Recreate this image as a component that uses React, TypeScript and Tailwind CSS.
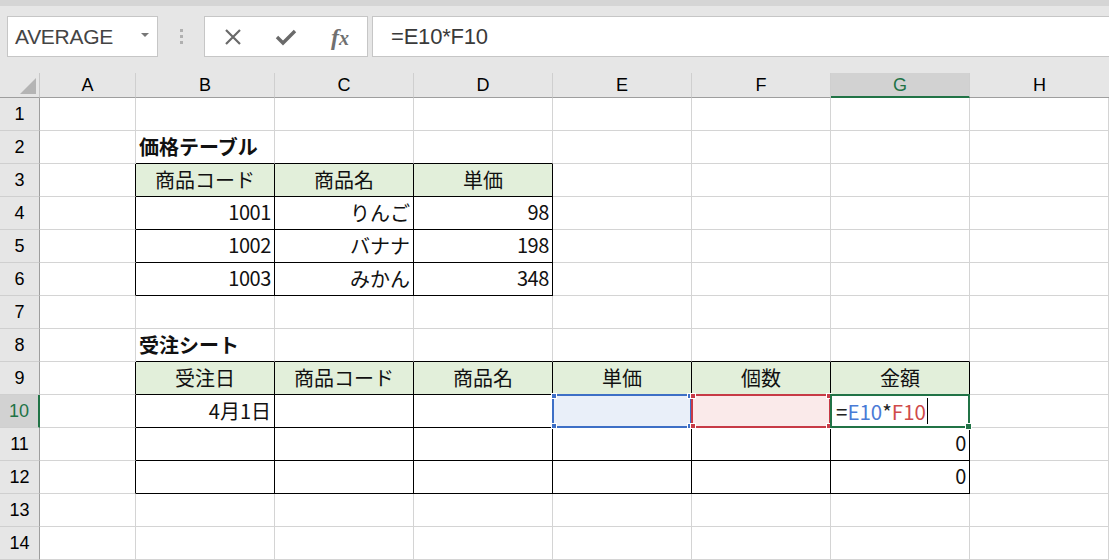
import React from "react";

const COLS = ["A", "B", "C", "D", "E", "F", "G", "H"];
const ROWS = Array.from({ length: 14 }, (_, i) => i + 1);

type Cell = { t: string; a?: "l" | "c" | "r"; b?: boolean; h?: boolean; n?: boolean };

const DATA: Record<string, Cell> = {
  "2-1": { t: "価格テーブル", a: "l", b: true },
  "3-1": { t: "商品コード", a: "c", h: true },
  "3-2": { t: "商品名", a: "c", h: true },
  "3-3": { t: "単価", a: "c", h: true },
  "4-1": { t: "1001", a: "r", n: true },
  "4-2": { t: "りんご", a: "r" },
  "4-3": { t: "98", a: "r", n: true },
  "5-1": { t: "1002", a: "r", n: true },
  "5-2": { t: "バナナ", a: "r" },
  "5-3": { t: "198", a: "r", n: true },
  "6-1": { t: "1003", a: "r", n: true },
  "6-2": { t: "みかん", a: "r" },
  "6-3": { t: "348", a: "r", n: true },
  "8-1": { t: "受注シート", a: "l", b: true },
  "9-1": { t: "受注日", a: "c", h: true },
  "9-2": { t: "商品コード", a: "c", h: true },
  "9-3": { t: "商品名", a: "c", h: true },
  "9-4": { t: "単価", a: "c", h: true },
  "9-5": { t: "個数", a: "c", h: true },
  "9-6": { t: "金額", a: "c", h: true },
  "10-1": { t: "4月1日", a: "r" },
  "11-6": { t: "0", a: "r", n: true },
  "12-6": { t: "0", a: "r", n: true },
};

function inT(r: number, c: number) {
  return (r >= 3 && r <= 6 && c >= 1 && c <= 3) || (r >= 9 && r <= 12 && c >= 1 && c <= 6);
}

function Corners({ color }: { color: string }) {
  const sq = `absolute w-[6px] h-[6px] border border-white ${color}`;
  return (
    <>
      <div className={`${sq} -left-[3px] -top-[3px]`} />
      <div className={`${sq} -right-[3px] -top-[3px]`} />
      <div className={`${sq} -left-[3px] -bottom-[3px]`} />
      <div className={`${sq} -right-[3px] -bottom-[3px]`} />
    </>
  );
}

function DataCell({ r, c }: { r: number; c: number }) {
  const d = DATA[`${r}-${c}`];
  const rb = inT(r, c) || inT(r, c + 1);
  const bb = inT(r, c) || inT(r + 1, c);
  const isE10 = r === 10 && c === 4;
  const isF10 = r === 10 && c === 5;
  const isG10 = r === 10 && c === 6;
  const bg = d?.h ? "bg-[#e2efda]" : isE10 ? "bg-[#e9eff9]" : isF10 ? "bg-[#faeaea]" : "bg-white";
  const align = d?.a === "r" ? "justify-end" : d?.a === "c" ? "justify-center" : "justify-start";
  return (
    <div
      className={`relative flex items-center px-[3px] border-r border-b ${rb ? "border-r-black" : "border-r-[#d4d4d4]"} ${bb ? "border-b-black" : "border-b-[#d4d4d4]"} ${bg} ${align} overflow-visible whitespace-nowrap text-[20px] leading-none text-[#111] font-['Noto_Sans_CJK_JP',sans-serif] ${d?.b ? "font-bold" : "font-normal"}`}
    >
      {d && <span className={d.n ? "-translate-y-[1px] tracking-[-0.4px]" : ""}>{d.t}</span>}
      {isE10 && (
        <div className="absolute -left-[1px] -top-[1px] -right-[1px] -bottom-[1px] border-2 border-[#3d6fc6] z-10">
          <Corners color="bg-[#3d6fc6]" />
        </div>
      )}
      {isF10 && (
        <div className="absolute -left-[1px] -top-[1px] -right-[1px] -bottom-[1px] border-2 border-[#c73a46] z-10">
          <Corners color="bg-[#c73a46]" />
        </div>
      )}
      {isG10 && (
        <>
          <div className="absolute -left-[1px] -top-[1px] -right-[1px] -bottom-[1px] border-2 border-[#217346] z-20">
            <div className="absolute w-[7px] h-[7px] -right-[4px] -bottom-[4px] bg-[#217346] border border-white" />
          </div>
          <div className="relative z-30 flex items-center h-full pl-[2px] text-[20.5px]">
            <span className="text-[#222]">=</span>
            <span className="text-[#4a7bd6]">E10</span>
            <span className="text-[#222]">*</span>
            <span className="text-[#d04a4a]">F10</span>
            <span className="ml-[1px] w-px h-[26px] bg-black" />
          </div>
        </>
      )}
    </div>
  );
}

export default function App() {
  return (
    <div className="w-[1109px] h-[560px] overflow-hidden bg-[#e6e6e6] font-['Liberation_Sans',Arial,sans-serif]">
      {/* top strip */}
      <div className="h-[6px] bg-[#d5d5d5]" />
      {/* formula toolbar */}
      <div className="h-[67px] flex items-start pt-[10px] pl-[7px]">
        <div className="w-[151px] h-[41px] bg-white border border-[#c6c6c6] flex items-center justify-between pl-[7px] pr-[8px]">
          <span className="text-[21px] text-[#444] tracking-[-0.3px]">AVERAGE</span>
          <svg width="8" height="5" viewBox="0 0 8 5" className="mb-[2px]">
            <path d="M0 0 L8 0 L4 4 Z" fill="#777" />
          </svg>
        </div>
        <div className="w-[46px] h-[41px] flex flex-col items-center justify-center gap-[3px]">
          <div className="w-[3px] h-[3px] bg-[#b0b0b0]" />
          <div className="w-[3px] h-[3px] bg-[#b0b0b0]" />
          <div className="w-[3px] h-[3px] bg-[#b0b0b0]" />
        </div>
        <div className="w-[164px] h-[41px] bg-white border border-[#c6c6c6] flex items-center">
          <div className="w-[54px] flex justify-center pl-[2px]">
            <svg width="18" height="18" viewBox="0 0 18 18">
              <path d="M2 2 L16 16 M16 2 L2 16" stroke="#6a6a6a" strokeWidth="2.2" />
            </svg>
          </div>
          <div className="w-[54px] flex justify-center">
            <svg width="22" height="18" viewBox="0 0 22 18">
              <path d="M2 9 L8 15 L20 3" stroke="#6a6a6a" strokeWidth="3.4" fill="none" />
            </svg>
          </div>
          <div className="w-[54px] flex justify-center">
            <span className="font-['Liberation_Serif',serif] italic font-bold text-[24px] text-[#707070] leading-none">
              f<span className="text-[20px]">x</span>
            </span>
          </div>
        </div>
        <div className="ml-[4px] flex-1 h-[41px] bg-white border-y border-l border-[#c6c6c6] flex items-center pl-[18px]">
          <span className="text-[22px] text-[#3a3a3a] tracking-[-0.2px]">=E10*F10</span>
        </div>
      </div>
      {/* sheet grid */}
      <div className="grid grid-cols-[40px_96px_139px_139px_139px_139px_139px_139px_1fr] grid-rows-[25px_repeat(14,33px)]">
        {/* corner */}
        <div className="relative bg-[#e6e6e6] border-r border-b border-r-[#c8c8c8] border-b-[#9e9e9e]">
          <svg width="16" height="16" viewBox="0 0 16 16" className="absolute right-[3px] bottom-[3px]">
            <path d="M16 0 L16 16 L0 16 Z" fill="#b4b4b4" />
          </svg>
        </div>
        {COLS.map((c, i) => {
          const sel = c === "G";
          return (
            <div
              key={c}
              className={`flex items-center justify-center text-[18px] leading-none border-r border-r-[#cfcfcf] ${sel ? "bg-[#d2d2d2] text-[#217346] border-b-2 border-b-[#217346]" : "bg-[#e6e6e6] text-black border-b border-b-[#9e9e9e]"} ${i === COLS.length - 1 ? "border-r-0" : ""}`}
            >
              {c}
            </div>
          );
        })}
        {ROWS.map((r) => {
          const sel = r === 10;
          return (
            <React.Fragment key={r}>
              <div
                className={`flex items-center justify-center text-[18px] leading-none border-b border-b-[#cfcfcf] ${sel ? "bg-[#d2d2d2] text-[#217346] border-r-2 border-r-[#217346]" : "bg-[#e6e6e6] text-black border-r border-r-[#9e9e9e]"}`}
              >
                {r}
              </div>
              {COLS.map((_, c) => (
                <DataCell key={c} r={r} c={c} />
              ))}
            </React.Fragment>
          );
        })}
      </div>
    </div>
  );
}
